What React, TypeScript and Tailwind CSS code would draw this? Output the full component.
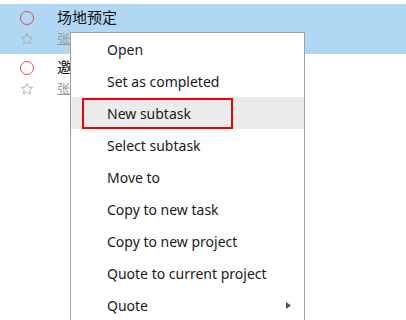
import { useState } from 'react';

const tasks = [
  { id: 1, title: '场地预定', owner: '张三', selected: true },
  { id: 2, title: '邀请嘉宾', owner: '张三', selected: false },
];

const menuItems = [
  'Open',
  'Set as completed',
  'New subtask',
  'Select subtask',
  'Move to',
  'Copy to new task',
  'Copy to new project',
  'Quote to current project',
  'Quote',
];

function StarIcon() {
  return (
    <svg width="14" height="14" viewBox="0 0 24 24" fill="none" stroke="#a9a9a9" strokeWidth="1.5" strokeLinejoin="round">
      <path d="M12 2.5l2.9 6.1 6.6.8-4.9 4.6 1.3 6.6L12 17.3l-5.9 3.3 1.3-6.6-4.9-4.6 6.6-.8z" />
    </svg>
  );
}

export default function App() {
  const [active] = useState('New subtask');

  return (
    <div
      className="relative w-[406px] h-[320px] overflow-hidden bg-white pt-1"
      style={{ fontFamily: '"Noto Sans", "Noto Sans CJK SC", sans-serif' }}
    >
      {tasks.map((task) => (
        <div
          key={task.id}
          className={`flex h-[50px] ${task.selected ? 'bg-[#b0d7f3]' : 'bg-white'}`}
        >
          <div className="w-[54px] flex flex-col items-center pt-[7px]">
            <div className="w-[14px] h-[14px] rounded-full border border-[#e8474d]" />
            <div className="mt-[7px]">
              <StarIcon />
            </div>
          </div>
          <div className="pl-[3px] pt-[3px]">
            <div className="text-[15px] leading-[20px] text-[#111]">{task.title}</div>
            <div className="text-[13px] leading-[18px] text-[#9a9a9a] underline mt-[2px]">{task.owner}</div>
          </div>
        </div>
      ))}

      <div className="absolute left-[70px] top-[32px] w-[235px] border border-[#a0a0a0] bg-white">
        {menuItems.map((item) => (
          <div
            key={item}
            className={`relative flex items-center h-8 pl-9 text-[14px] text-[#1a1a1a] ${
              item === active ? 'bg-[#ebebeb]' : ''
            }`}
          >
            {item}
            {item === active && (
              <div className="absolute left-[11px] top-[1px] w-[151px] h-[31px] border-2 border-[#f00000]" />
            )}
            {item === 'Quote' && (
              <svg className="absolute right-[13px]" width="5" height="7" viewBox="0 0 5 7">
                <path d="M0 0L5 3.5L0 7z" fill="#555" />
              </svg>
            )}
          </div>
        ))}
      </div>
    </div>
  );
}
